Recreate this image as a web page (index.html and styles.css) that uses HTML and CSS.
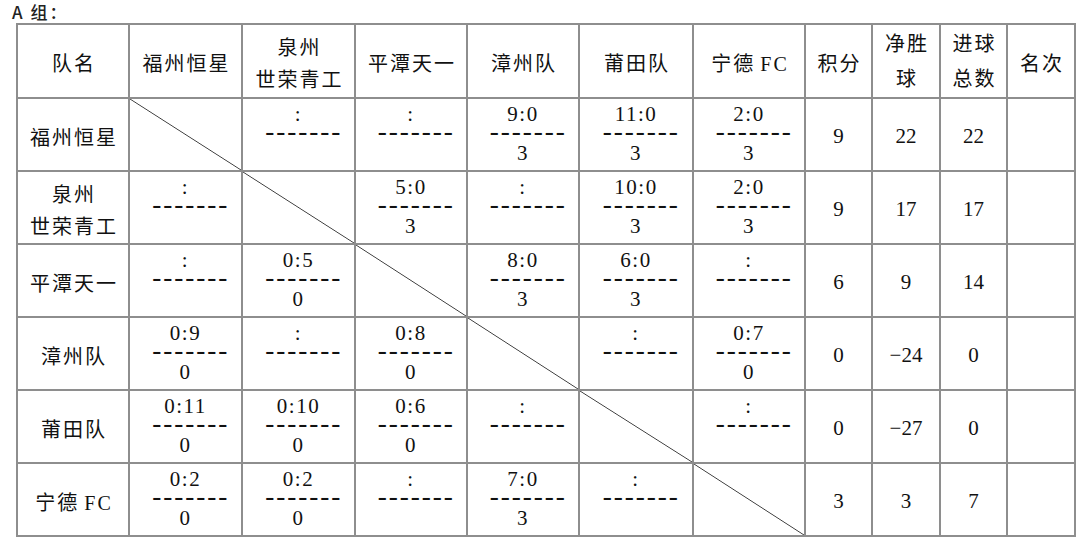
FILE: index.html
```html
<!DOCTYPE html>
<html lang="zh-CN">
<head>
<meta charset="utf-8">
<title>A组积分表</title>
<link rel="stylesheet" href="styles.css">
</head>
<body>
<div class="group-label">A 组：</div>
<table class="grid">
  <colgroup>
    <col class="w112"><col class="w113"><col class="w113"><col class="w112"><col class="w112"><col class="w114"><col class="w112"><col class="w67"><col class="w68"><col class="w67"><col class="w68">
  </colgroup>
  <tr>
    <td><div class="name">队名</div></td>
    <td><div class="name">福州恒星</div></td>
    <td><div class="name">泉州<br>世荣青工</div></td>
    <td><div class="name">平潭天一</div></td>
    <td><div class="name">漳州队</div></td>
    <td><div class="name">莆田队</div></td>
    <td><div class="name tight">宁德 FC</div></td>
    <td><div class="name">积分</div></td>
    <td><div class="name tall">净胜<br>球</div></td>
    <td><div class="name tall">进球<br>总数</div></td>
    <td><div class="name">名次</div></td>
  </tr>
  <tr>
    <td><div class="name">福州恒星</div></td>
    <td class="diag"></td>
    <td><div class="sc"><div>:</div><div class="d">-------</div><div>&nbsp;</div></div></td>
    <td><div class="sc"><div>:</div><div class="d">-------</div><div>&nbsp;</div></div></td>
    <td><div class="sc"><div>9:0</div><div class="d">-------</div><div>3</div></div></td>
    <td><div class="sc"><div>11:0</div><div class="d">-------</div><div>3</div></div></td>
    <td><div class="sc"><div>2:0</div><div class="d">-------</div><div>3</div></div></td>
    <td><div class="num">9</div></td><td><div class="num">22</div></td><td><div class="num">22</div></td><td></td>
  </tr>
  <tr>
    <td><div class="name">泉州<br>世荣青工</div></td>
    <td><div class="sc"><div>:</div><div class="d">-------</div><div>&nbsp;</div></div></td>
    <td class="diag"></td>
    <td><div class="sc"><div>5:0</div><div class="d">-------</div><div>3</div></div></td>
    <td><div class="sc"><div>:</div><div class="d">-------</div><div>&nbsp;</div></div></td>
    <td><div class="sc"><div>10:0</div><div class="d">-------</div><div>3</div></div></td>
    <td><div class="sc"><div>2:0</div><div class="d">-------</div><div>3</div></div></td>
    <td><div class="num">9</div></td><td><div class="num">17</div></td><td><div class="num">17</div></td><td></td>
  </tr>
  <tr>
    <td><div class="name">平潭天一</div></td>
    <td><div class="sc"><div>:</div><div class="d">-------</div><div>&nbsp;</div></div></td>
    <td><div class="sc"><div>0:5</div><div class="d">-------</div><div>0</div></div></td>
    <td class="diag"></td>
    <td><div class="sc"><div>8:0</div><div class="d">-------</div><div>3</div></div></td>
    <td><div class="sc"><div>6:0</div><div class="d">-------</div><div>3</div></div></td>
    <td><div class="sc"><div>:</div><div class="d">-------</div><div>&nbsp;</div></div></td>
    <td><div class="num">6</div></td><td><div class="num">9</div></td><td><div class="num">14</div></td><td></td>
  </tr>
  <tr>
    <td><div class="name">漳州队</div></td>
    <td><div class="sc"><div>0:9</div><div class="d">-------</div><div>0</div></div></td>
    <td><div class="sc"><div>:</div><div class="d">-------</div><div>&nbsp;</div></div></td>
    <td><div class="sc"><div>0:8</div><div class="d">-------</div><div>0</div></div></td>
    <td class="diag"></td>
    <td><div class="sc"><div>:</div><div class="d">-------</div><div>&nbsp;</div></div></td>
    <td><div class="sc"><div>0:7</div><div class="d">-------</div><div>0</div></div></td>
    <td><div class="num">0</div></td><td><div class="num">−24</div></td><td><div class="num">0</div></td><td></td>
  </tr>
  <tr>
    <td><div class="name">莆田队</div></td>
    <td><div class="sc"><div>0:11</div><div class="d">-------</div><div>0</div></div></td>
    <td><div class="sc"><div>0:10</div><div class="d">-------</div><div>0</div></div></td>
    <td><div class="sc"><div>0:6</div><div class="d">-------</div><div>0</div></div></td>
    <td><div class="sc"><div>:</div><div class="d">-------</div><div>&nbsp;</div></div></td>
    <td class="diag"></td>
    <td><div class="sc"><div>:</div><div class="d">-------</div><div>&nbsp;</div></div></td>
    <td><div class="num">0</div></td><td><div class="num">−27</div></td><td><div class="num">0</div></td><td></td>
  </tr>
  <tr>
    <td><div class="name tight">宁德 FC</div></td>
    <td><div class="sc"><div>0:2</div><div class="d">-------</div><div>0</div></div></td>
    <td><div class="sc"><div>0:2</div><div class="d">-------</div><div>0</div></div></td>
    <td><div class="sc"><div>:</div><div class="d">-------</div><div>&nbsp;</div></div></td>
    <td><div class="sc"><div>7:0</div><div class="d">-------</div><div>3</div></div></td>
    <td><div class="sc"><div>:</div><div class="d">-------</div><div>&nbsp;</div></div></td>
    <td class="diag"></td>
    <td><div class="num">3</div></td><td><div class="num">3</div></td><td><div class="num">7</div></td><td></td>
  </tr>
</table>
</body>
</html>
```
FILE: styles.css
```css
html, body {
  margin: 0;
  padding: 0;
  background: #ffffff;
}
body {
  font-family: "Liberation Serif", "Noto Sans CJK SC", serif;
  color: #111;
}
.group-label {
  height: 23px;
  padding-left: 12px;
  font-family: "Noto Sans CJK SC", sans-serif;
  font-size: 17px;
  font-weight: 500;
  line-height: 23px;
  letter-spacing: 2px;
  color: #222;
  overflow: hidden;
}
.grid {
  margin-left: 16px;
  border-collapse: collapse;
  table-layout: fixed;
  width: 1060px;
}
.grid tr { height: 73px; }
.grid td {
  border: 2px solid #8e8e8e;
  height: 71px;
  padding: 0;
  text-align: center;
  vertical-align: middle;
  overflow: hidden;
}
.w112 { width: 112px; }
.w113 { width: 113px; }
.w114 { width: 114px; }
.w67 { width: 67px; }
.w68 { width: 68px; }
.name {
  font-size: 20px;
  letter-spacing: 2px;
  line-height: 32px;
  padding-top: 6px;
  padding-left: 2px;
}
.name.tight { word-spacing: -2px; }
.name.tall { line-height: 35px; padding-top: 2px; }
.num {
  font-size: 21px;
  line-height: 24px;
  padding-top: 2px;
}
.sc {
  font-size: 21px;
  line-height: 19.5px;
  letter-spacing: 1.5px;
}
.sc .d {
  font-family: "Liberation Mono", monospace;
  font-size: 26px;
  letter-spacing: -4.6px;
  color: #111;
  padding-left: 4px;
}
.diag {
  background: linear-gradient(to top right, transparent calc(50% - 0.8px), #3a3a3a 50%, transparent calc(50% + 0.8px));
}
```
